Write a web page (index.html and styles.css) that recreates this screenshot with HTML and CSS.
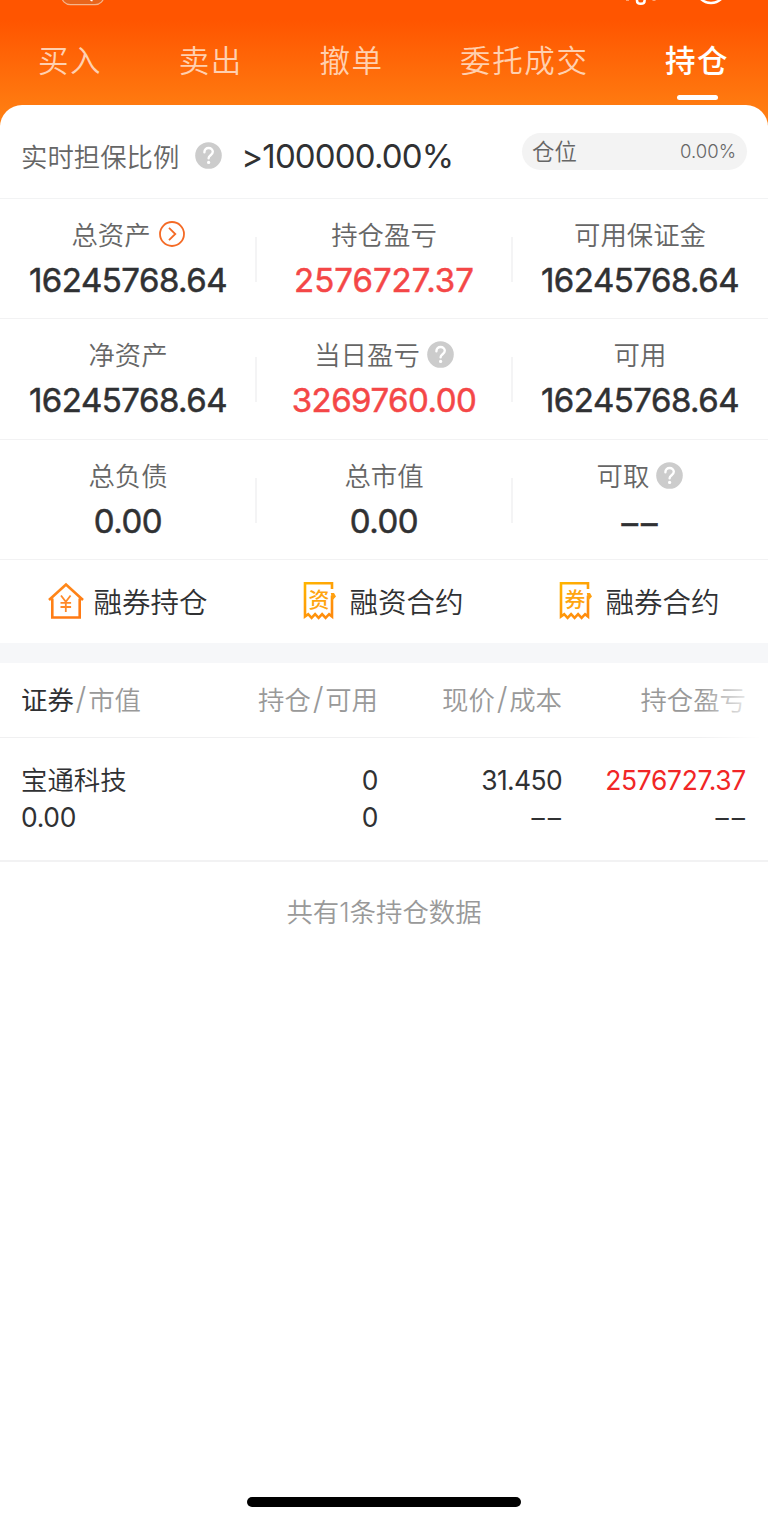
FILE: index.html
```html
<!DOCTYPE html>
<html lang="zh-CN">
<head>
<meta charset="utf-8">
<title>持仓</title>
<link rel="stylesheet" href="styles.css">
</head>
<body>
<svg class="defs" width="0" height="0">
  <defs>
    <linearGradient id="amber" x1="0" y1="0" x2="0.6" y2="1"><stop offset="0" stop-color="#ffb400"/><stop offset="1" stop-color="#ff8c0c"/></linearGradient>
    <linearGradient id="orange" x1="0" y1="0" x2="0.4" y2="1"><stop offset="0" stop-color="#ff8a1a"/><stop offset="1" stop-color="#ff7a14"/></linearGradient>
    <symbol id="help" viewBox="0 0 27 27">
      <circle cx="13.5" cy="13.5" r="13.3" fill="#ccc"/>
      <path d="M9.400 10.200c0-2.700 1.900-4.200 4.200-4.200s4.200 1.500 4.200 3.800c0 3.300-4.200 3.500-4.200 6.400" fill="none" stroke="#fff" stroke-width="2.400" stroke-linecap="round"/>
      <circle cx="13.6" cy="20.400" r="1.600" fill="#fff"/>
    </symbol>
    <symbol id="bill" viewBox="0 0 34 40">
      <path d="M29 8V2.300H2V35.500l3.200-2.300 3.400 3.600 3.500-3.600 3.500 3.600 3.500-3.600 3.500 3.600 3.500-3.600L29 35.500V14.500" fill="none" stroke="url(#amber)" stroke-width="2.600"/>
      <path d="M27.800 12h3.200l2 3.500-3.800 4z" fill="#ffa010"/>
    </symbol>
  </defs>
</svg>
<div class="app">
  <header class="top">
    <svg class="statusbar" width="768" height="10" viewBox="0 0 768 10">
      <rect x="61.500" y="-15" width="42.500" height="19.700" rx="9" fill="#e8651c" stroke="#f5b58c" stroke-width="1.200"/>
      <path d="M90.500 0l2 .8" stroke="#fff" stroke-width="1.500"/>
      <path d="M637-3V.7c0 4.200 7.600 4.200 7.600 0v-4" fill="none" stroke="#fff" stroke-width="2.500"/>
      <path d="M626 .3h3M652.500 .3h3" stroke="#ffb48a" stroke-width="1"/>
      <circle cx="711" cy="-12" r="15" fill="none" stroke="#fff" stroke-width="2.400"/>
    </svg>
    <nav class="tabs">
      <span class="tab">买入</span><span class="tab">卖出</span><span class="tab">撤单</span><span class="tab">委托成交</span><span class="tab active">持仓</span>
    </nav>
  </header>
  <main class="sheet">
    <section class="ratio">
      <span class="label">实时担保比例</span>
      <svg class="help"><use href="#help"/></svg>
      <span class="ratio-value">&gt;100000.00%</span>
      <div class="pill"><span class="pill-name">仓位</span><span class="pill-value">0.00%</span></div>
    </section>
    <section class="stats">
      <div class="cell"><div class="label">总资产<svg class="arrow" viewBox="0 0 26 26"><circle cx="13" cy="13" r="12" fill="none" stroke="#f46a25" stroke-width="1.800"/><path d="M10 6.800l6.300 6.200-6.300 6.200" fill="none" stroke="#f46a25" stroke-width="1.800"/></svg></div><div class="num">16245768.64</div></div>
      <div class="cell"><div class="label">持仓盈亏</div><div class="num red loose">2576727.37</div></div>
      <div class="cell"><div class="label">可用保证金</div><div class="num">16245768.64</div></div>
    </section>
    <section class="stats">
      <div class="cell"><div class="label">净资产</div><div class="num">16245768.64</div></div>
      <div class="cell"><div class="label">当日盈亏<svg class="help"><use href="#help"/></svg></div><div class="num red">3269760.00</div></div>
      <div class="cell"><div class="label">可用</div><div class="num">16245768.64</div></div>
    </section>
    <section class="stats">
      <div class="cell"><div class="label">总负债</div><div class="num">0.00</div></div>
      <div class="cell"><div class="label">总市值</div><div class="num">0.00</div></div>
      <div class="cell"><div class="label">可取<svg class="help"><use href="#help"/></svg></div><div class="num dash">––</div></div>
    </section>
    <section class="links">
      <div class="link"><svg width="38" height="40" viewBox="0 0 38 40"><path d="M2 19L19 3.500 36 19M5.300 17.500v19h27.400v-19" fill="none" stroke="url(#orange)" stroke-width="2.600"/><path d="M14 14.500l4.800 6.300 4.800-6.300M18.800 20.300V31M13.500 21.800h10.600M13.500 26h10.600" fill="none" stroke="#ff8a2a" stroke-width="1.800"/></svg><span>融券持仓</span></div>
      <div class="link"><svg width="34" height="40" viewBox="0 0 34 40"><use href="#bill"/><text class="glyph" x="16" y="25.500">资</text></svg><span>融资合约</span></div>
      <div class="link"><svg width="34" height="40" viewBox="0 0 34 40"><use href="#bill"/><text class="glyph" x="16" y="25.500">券</text></svg><span>融券合约</span></div>
    </section>
    <div class="band"></div>
    <section class="grid head">
      <span><b>证券</b><i>/</i>市值</span><span>持仓<i>/</i>可用</span><span>现价<i>/</i>成本</span><span>持仓盈亏</span>
    </section>
    <section class="grid row">
      <div><span class="name">宝通科技</span><br>0.00</div><div>0<br>0</div><div><span class="price">31.450</span><br><span class="dashes">––</span></div><div><span class="profit">2576727.37</span><br><span class="dashes">––</span></div>
    </section>
    <p class="total">共有1条持仓数据</p>
  </main>
  <div class="home"></div>
</div>
</body>
</html>
```
FILE: styles.css
```css
* { box-sizing: border-box; }
body { margin: 0; background: #fff; color: #303133; font-family: Inter, "Noto Sans CJK SC", sans-serif; font-weight: 350; }
.defs { position: absolute; }
.app { width: 768px; height: 1522px; display: flex; flex-direction: column; overflow: hidden; background: linear-gradient(#ff5500 0, #ff5500 20px, #ff7a10 105px, #ff8114 125px, #fff 126px); position: relative; }
.top { height: 105px; flex: none; }
.statusbar { position: absolute; top: 0; left: 0; }
.tabs { display: flex; gap: 76.500px; padding: 38px 0 0 38px; }
.tab { height: 67px; line-height: 45px; font-size: 30.500px; letter-spacing: 1.600px; color: #ffd0b0; white-space: nowrap; display: flex; flex-direction: column; align-items: center; }
.active { color: #fff; font-weight: 500; }
.active::after { content: ""; width: 41px; height: 5px; margin: 12px 0 0 1px; border-radius: 3px; background: #fff; }
.sheet { flex: 1; background: #fff; border-radius: 22px 22px 0 0; }
.label { color: #666; font-size: 26.400px; line-height: 40px; height: 38px; white-space: nowrap; display: flex; align-items: center; justify-content: center; }
.help { width: 27px; height: 27px; flex: none; }
.ratio { height: 93.500px; padding: 0 21px 0 21px; display: flex; align-items: center; border-bottom: 1.500px solid #f2f3f4; }
.ratio .label { padding-top: 11px; height: 49px; }
.ratio .help { margin: 9px 20px 0 16px; }
.ratio-value { font-size: 33px; font-weight: 400; line-height: 40px; letter-spacing: -0.850px; margin: 10px 0 0 -1px; }
.pill { margin: 1px 0 0 auto; width: 225px; height: 37px; border-radius: 19px; background: #f3f3f3; display: flex; justify-content: space-between; align-items: center; padding: 0 11px 0 10px; color: #666; }
.pill-name { font-size: 22.400px; line-height: 34px; }
.pill-value { font-size: 18.500px; margin-top: -2px; }
.stats { height: 120.500px; display: grid; grid-template-columns: repeat(3, 1fr); border-bottom: 1.500px solid #f2f2f3; }
.cell { padding-top: 17px; position: relative; text-align: center; }
.cell + .cell::before { content: ""; position: absolute; left: -1px; top: 38px; width: 2px; height: 45px; background: #f4f4f5; }
.cell .help { margin: -1px 0 0 7px; }
.arrow { width: 26px; height: 26px; margin: -1px 0 0 8px; }
.num { font-size: 33px; line-height: 40px; margin-top: 6px; font-weight: 400; letter-spacing: -0.500px; -webkit-text-stroke: 0.500px currentColor; }
.loose { letter-spacing: 0; }
.red { color: #f44747; }
.dash { letter-spacing: 3px; padding: 2px 0 0 2px; }
.links { height: 83px; display: grid; grid-template-columns: repeat(3, 1fr); }
.link { display: flex; align-items: center; justify-content: center; gap: 9px; font-size: 28.500px; }
.link span { margin: -2px 1px 0 -1px; }
.link svg { flex: none; margin-top: -1px; }
.link + .link { gap: 13px; }
.glyph { font: 500 21px "Noto Sans CJK SC", sans-serif; fill: #ffa510; text-anchor: middle; }
.band { height: 20px; background: #f6f7f9; }
.grid { display: grid; grid-template-columns: 150px 207px 184px 184px; padding: 0 22px 0 21px; }
.grid > * { text-align: right; white-space: nowrap; }
.grid > :first-child { text-align: left; }
.head { height: 74.500px; line-height: 75px; font-size: 26.400px; color: #999; border-bottom: 1.500px solid #f0f0f1; position: relative; }
.head::after { content: ""; position: absolute; right: 0; top: 0; width: 68px; height: 76px; background: linear-gradient(90deg, rgba(255,255,255,0), #fff 90%); }
.head b { font-weight: 400; color: #303133; }
.head i { font-style: normal; font-size: 31px; font-weight: 300; margin: 0 1.800px; line-height: 1; }
.row { height: 124px; padding-top: 24.500px; font-size: 26.400px; font-weight: 400; letter-spacing: -0.300px; line-height: 37px; border-bottom: 2px solid #f2f2f3; }
.name { font-weight: 350; letter-spacing: 0; }
.price { letter-spacing: -0.600px; }
.profit { color: #f12626; }
.dashes { letter-spacing: 3px; margin-right: -2px; }
.total { margin: 0; padding-top: 31px; line-height: 38px; font-size: 26.400px; color: #999; text-align: center; }
.home { position: absolute; left: 247px; top: 1497px; width: 274px; height: 10px; border-radius: 5px; background: #000; }
```
